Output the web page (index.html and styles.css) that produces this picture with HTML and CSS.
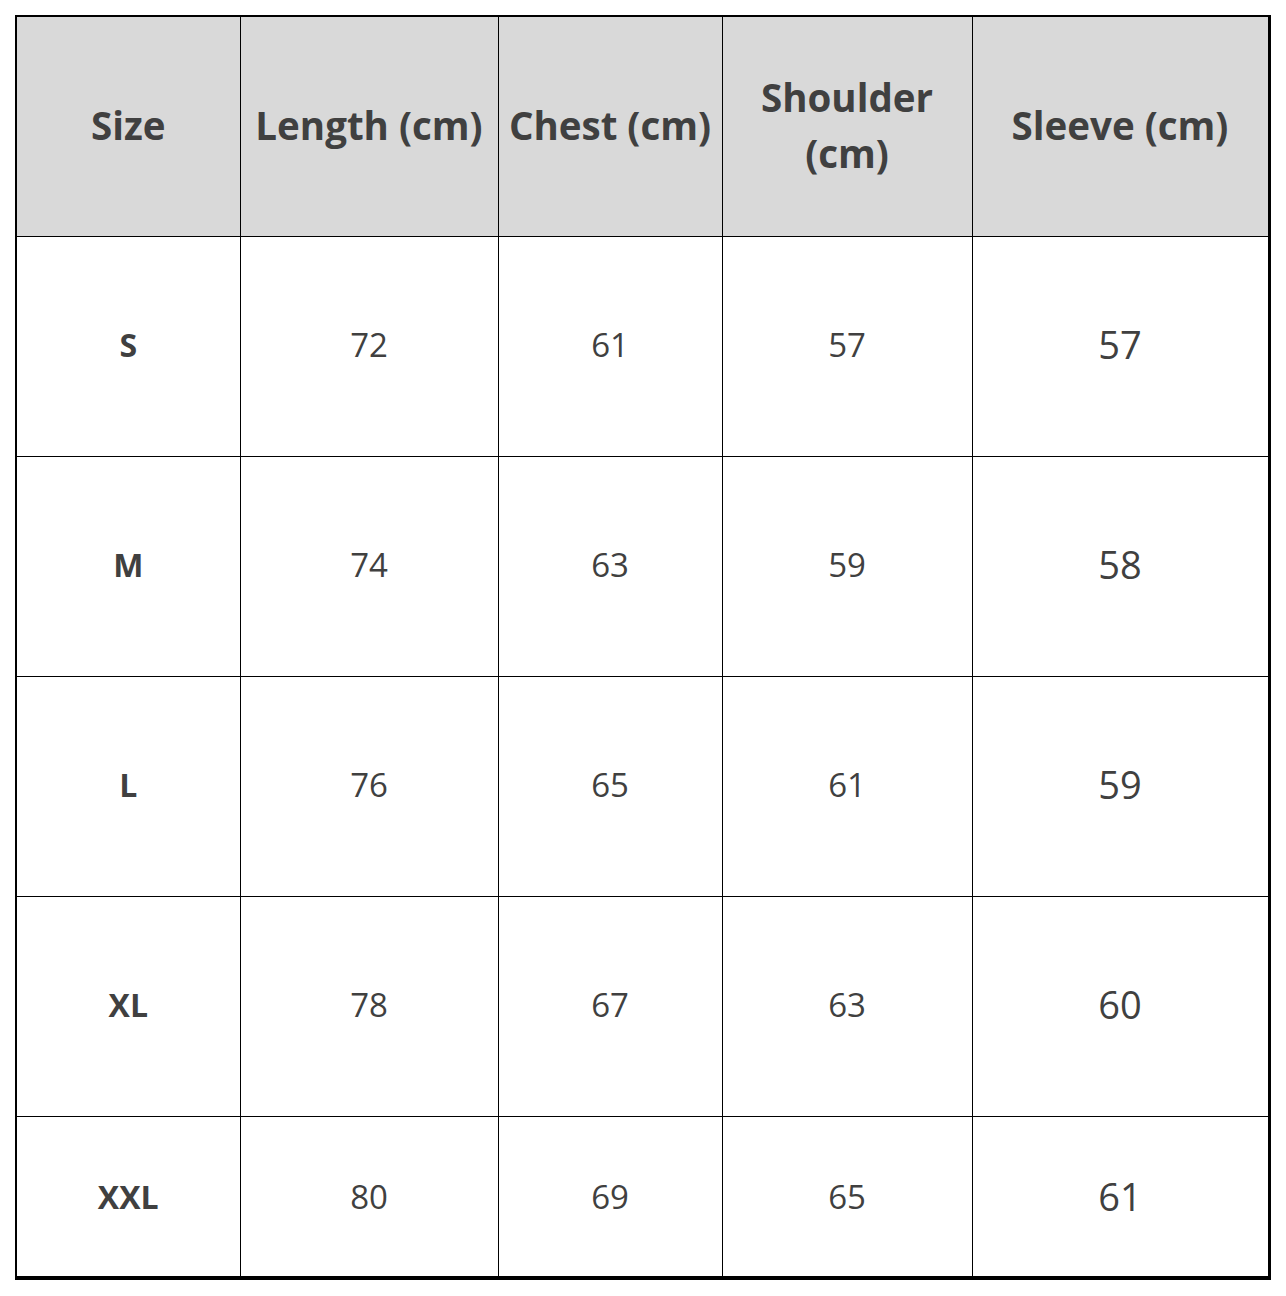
FILE: index.html
```html
<!DOCTYPE html>
<html>
<head>
<meta charset="utf-8">
<link rel="stylesheet" href="styles.css">
</head>
<body>
<table class="size-table">
  <colgroup>
    <col class="c1"><col class="c2"><col class="c3"><col class="c4"><col class="c5">
  </colgroup>
  <thead>
    <tr class="head-row">
      <th>Size</th>
      <th>Length (cm)</th>
      <th>Chest (cm)</th>
      <th>Shoulder (cm)</th>
      <th>Sleeve (cm)</th>
    </tr>
  </thead>
  <tbody>
    <tr class="row"><td class="lbl">S</td><td>72</td><td>61</td><td>57</td><td class="big">57</td></tr>
    <tr class="row"><td class="lbl">M</td><td>74</td><td>63</td><td>59</td><td class="big">58</td></tr>
    <tr class="row"><td class="lbl">L</td><td>76</td><td>65</td><td>61</td><td class="big">59</td></tr>
    <tr class="row"><td class="lbl">XL</td><td>78</td><td>67</td><td>63</td><td class="big">60</td></tr>
    <tr class="row last"><td class="lbl">XXL</td><td>80</td><td>69</td><td>65</td><td class="big">61</td></tr>
  </tbody>
</table>
</body>
</html>
```
FILE: styles.css
```css
html, body {
  margin: 0;
  padding: 0;
  background: #ffffff;
}
body {
  padding: 15px 0 0 15px;
  font-family: "Open Sans", "Noto Sans", sans-serif;
  color: #404040;
}
.size-table {
  border-collapse: collapse;
  table-layout: fixed;
  width: 1253px;
  border-top: 2px solid #000;
  border-left: 2px solid #000;
  border-right: 3px solid #000;
  border-bottom: 4px solid #000;
}
.c1 { width: 224px; }
.c2 { width: 258px; }
.c3 { width: 224px; }
.c4 { width: 250px; }
.c5 { width: 297px; }
th, td {
  border: 1px solid #000;
  text-align: center;
  vertical-align: middle;
  padding: 0 6px;
}
.head-row {
  height: 220px;
  background: #d9d9d9;
}
th {
  font-size: 38.5px;
  font-weight: 700;
  line-height: 56px;
  padding-bottom: 2px;
}
.row {
  height: 220px;
}
.row.last {
  height: 162px;
}
td {
  font-size: 33px;
  font-weight: 400;
  padding-bottom: 4px;
}
.row.last td {
  padding-bottom: 0;
}
td.lbl {
  font-weight: 700;
  font-size: 32px;
}
td.big {
  font-size: 38px;
}
```
